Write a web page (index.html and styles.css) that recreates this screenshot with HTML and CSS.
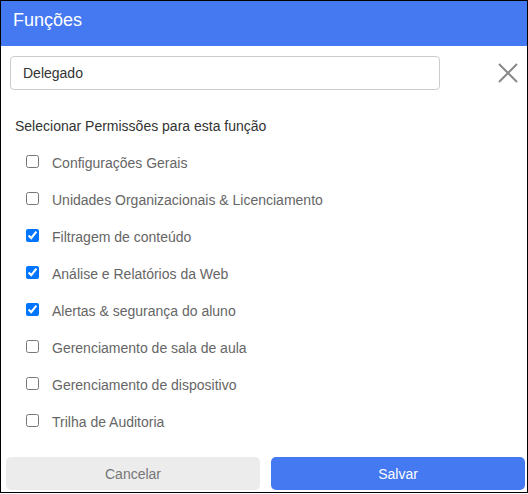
FILE: index.html
```html
<!DOCTYPE html>
<html lang="pt">
<head>
<meta charset="utf-8">
<title>Funções</title>
<link rel="stylesheet" href="styles.css">
</head>
<body>
<div class="dialog">
  <div class="header">Funções</div>
  <div class="name-row">
    <div class="name-input">Delegado</div>
    <button class="close" aria-label="Fechar">
      <svg width="20" height="20" viewBox="0 0 20 20"><path d="M1 1 L19 19 M19 1 L1 19" stroke="#8a8a8a" stroke-width="2" fill="none"/></svg>
    </button>
  </div>
  <div class="heading">Selecionar Permissões para esta função</div>
  <ul class="perms">
    <li class="perm"><input type="checkbox"><span>Configurações Gerais</span></li>
    <li class="perm"><input type="checkbox"><span>Unidades Organizacionais &amp; Licenciamento</span></li>
    <li class="perm"><input type="checkbox" checked><span>Filtragem de conteúdo</span></li>
    <li class="perm"><input type="checkbox" checked><span>Análise e Relatórios da Web</span></li>
    <li class="perm"><input type="checkbox" checked><span>Alertas &amp; segurança do aluno</span></li>
    <li class="perm"><input type="checkbox"><span>Gerenciamento de sala de aula</span></li>
    <li class="perm"><input type="checkbox"><span>Gerenciamento de dispositivo</span></li>
    <li class="perm"><input type="checkbox"><span>Trilha de Auditoria</span></li>
  </ul>
  <div class="footer">
    <button class="btn btn-cancel">Cancelar</button>
    <button class="btn btn-save">Salvar</button>
  </div>
</div>
</body>
</html>
```
FILE: styles.css
```css
html, body {
  margin: 0;
  padding: 0;
  background: #fff;
}
body {
  font-family: "Liberation Sans", Arial, sans-serif;
  font-size: 14px;
  color: #333;
}
.dialog {
  box-sizing: border-box;
  width: 528px;
  height: 493px;
  border: 1px solid #000;
  display: flex;
  flex-direction: column;
  background: #fff;
}
.header {
  box-sizing: border-box;
  height: 45px;
  background: #4479f1;
  color: #fff;
  font-size: 18px;
  line-height: 20px;
  padding: 9px 0 0 12px;
}
.name-row {
  display: flex;
  align-items: center;
  margin-top: 10px;
  padding: 0 9px 0 9px;
}
.name-input {
  box-sizing: border-box;
  width: 430px;
  height: 34px;
  border: 1px solid #cccccc;
  border-radius: 4px;
  padding: 0 12px;
  line-height: 32px;
  color: #333;
}
.close {
  margin-left: auto;
  width: 20px;
  height: 20px;
  padding: 0;
  border: 0;
  background: none;
  display: flex;
}
.heading {
  margin-top: 28px;
  padding-left: 14px;
  line-height: 16px;
  color: #333;
}
.perms {
  list-style: none;
  margin: 21px 0 0 0;
  padding: 0 0 0 24px;
}
.perm {
  display: flex;
  align-items: flex-start;
  height: 37px;
  line-height: 16px;
  color: #666;
}
.perm input {
  width: 13px;
  height: 13px;
  margin: 0 13px 0 1px;
  flex: none;
}
.footer {
  margin-top: auto;
  display: flex;
  gap: 11px;
  padding: 0 2px 2px 5px;
}
.btn {
  flex: 1;
  height: 33px;
  border: 0;
  border-radius: 5px;
  font-family: "Liberation Sans", Arial, sans-serif;
  font-size: 14px;
}
.btn-cancel {
  background: #ececec;
  color: #777;
}
.btn-save {
  background: #4479f1;
  color: #fff;
}
```
